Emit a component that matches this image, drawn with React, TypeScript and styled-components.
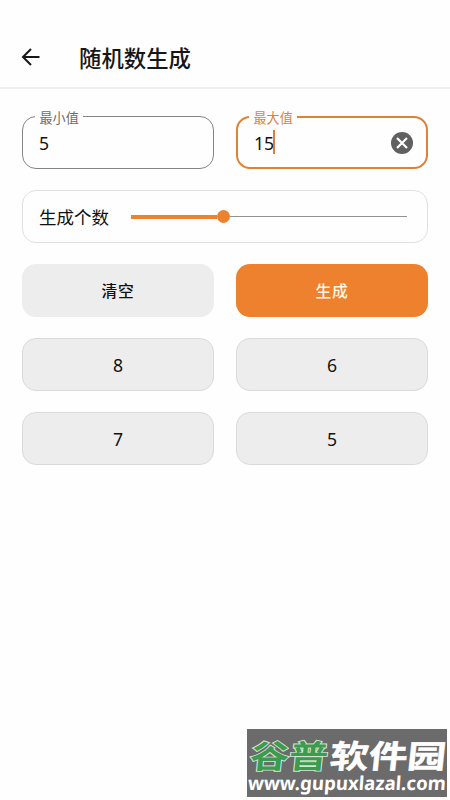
import React from "react";
import styled, { createGlobalStyle, css } from "styled-components";

const ORANGE = "#ee812e";

const GlobalStyle = createGlobalStyle`
  * { box-sizing: border-box; }
  body {
    margin: 0;
    background: #fefefe;
    color: #111;
    font-family: "Noto Sans", "Noto Sans CJK SC", sans-serif;
  }
`;

const Screen = styled.div`
  position: relative;
  width: 450px;
  height: 800px;
  overflow: hidden;
  background: #fefefe;
`;

const AppBar = styled.header`
  display: flex;
  align-items: center;
  height: 89px;
  padding: 27px 0 0 21px;
  border-bottom: 2px solid #f0f0f0;
`;

const BackButton = styled.button`
  display: flex;
  width: 20px;
  height: 20px;
  padding: 0;
  border: 0;
  background: none;
`;

const Title = styled.h1`
  margin: 0 0 0 38px;
  font-family: "Noto Sans CJK SC", sans-serif;
  font-size: 22.4px;
  line-height: 32px;
  font-weight: 500;
  color: #161616;
`;

const Content = styled.main`
  display: grid;
  grid-template-columns: 192px 192px;
  grid-auto-rows: 52.6px;
  gap: 21.5px 22px;
  padding: 27px 22px 0;
`;

const Field = styled.label<{ $active?: boolean }>`
  position: relative;
  display: flex;
  align-items: center;
  padding: 1px 14px 0 16px;
  border-radius: 14px;
  border: ${(p) => (p.$active ? "2px solid #e08136" : "1px solid #858585")};
  ${(p) => p.$active && css`padding: 1px 13px 0 16px;`}
`;

const FieldLabel = styled.span<{ $active?: boolean }>`
  position: absolute;
  top: ${(p) => (p.$active ? "-10px" : "-9px")};
  left: ${(p) => (p.$active ? "11px" : "12px")};
  padding: 0 4.5px;
  background: #fefefe;
  font-family: "Noto Sans CJK SC", sans-serif;
  font-size: 13.1px;
  line-height: 20px;
  color: ${(p) => (p.$active ? "#d98445" : "#6c6c6c")};
`;

const FieldValue = styled.span`
  font-size: 17.6px;
  line-height: 26px;
  color: #111;
`;

const Caret = styled.span`
  width: 2px;
  height: 24px;
  margin: -2px 0 0 -1px;
  background: #d7803a;
`;

const ClearIcon = styled.svg`
  width: 22px;
  height: 22px;
  margin-left: auto;
`;

const SliderCard = styled.section`
  grid-column: 1 / -1;
  display: flex;
  align-items: center;
  padding: 2px 20px 0 16px;
  border: 1.5px solid #e0e0e0;
  border-radius: 14px;
`;

const SliderLabel = styled.span`
  width: 92px;
  font-family: "Noto Sans CJK SC", sans-serif;
  font-size: 17.5px;
  line-height: 26px;
`;

const Track = styled.div`
  display: flex;
  align-items: center;
  flex: 1;
  margin-top: -1px;
`;

const Filled = styled.div`
  width: 86px;
  height: 4px;
  background: ${ORANGE};
`;

const Thumb = styled.div`
  width: 13px;
  height: 13px;
  margin-left: -0.5px;
  border-radius: 50%;
  background: ${ORANGE};
`;

const Remaining = styled.div`
  flex: 1;
  height: 1px;
  background: #929292;
`;

const Action = styled.button<{ $primary?: boolean }>`
  padding: 2px 0 0;
  border: 0;
  border-radius: 14px;
  background: ${(p) => (p.$primary ? ORANGE : "#ededed")};
  color: ${(p) => (p.$primary ? "#fff8ea" : "#111")};
  font: 500 15.8px/24px "Noto Sans CJK SC", sans-serif;
  letter-spacing: 0.7px;
`;

const Result = styled.div`
  display: flex;
  align-items: center;
  justify-content: center;
  border: 1px solid #dadada;
  border-radius: 14px;
  background: #ededed;
  font-size: 17.6px;
  line-height: 26px;
`;

const Watermark = styled.aside`
  position: absolute;
  left: 247px;
  top: 729px;
  width: 200px;
  height: 68px;
  background: #6b6b6b;
`;

const WatermarkArt = styled.svg`
  display: block;
  width: 200px;
  height: 68px;
  overflow: visible;
`;

export default function App() {
  return (
    <>
      <GlobalStyle />
      <Screen>
        <AppBar>
          <BackButton aria-label="返回">
            <svg width="20" height="20" viewBox="0 0 20 20" fill="none" stroke="#181818" strokeWidth="2">
              <path d="M18.5 10H2.5M10 2L2 10L10 18" />
            </svg>
          </BackButton>
          <Title>随机数生成</Title>
        </AppBar>
        <Content>
          <Field>
            <FieldLabel>最小值</FieldLabel>
            <FieldValue>5</FieldValue>
          </Field>
          <Field $active>
            <FieldLabel $active>最大值</FieldLabel>
            <FieldValue>15</FieldValue>
            <Caret />
            <ClearIcon viewBox="0 0 22 22">
              <circle cx="11" cy="11" r="11" fill="#606060" />
              <path d="M6 6L16 16M16 6L6 16" stroke="#fff" strokeWidth="2.2" />
            </ClearIcon>
          </Field>
          <SliderCard>
            <SliderLabel>生成个数</SliderLabel>
            <Track>
              <Filled />
              <Thumb />
              <Remaining />
            </Track>
          </SliderCard>
          <Action>清空</Action>
          <Action $primary>生成</Action>
          {[8, 6, 7, 5].map((n) => (
            <Result key={n}>{n}</Result>
          ))}
        </Content>
        <Watermark>
          <WatermarkArt viewBox="0 0 200 68">
            <g fontFamily="Noto Sans CJK SC, sans-serif" fontWeight="700" fontSize="32" transform="translate(0 38.5) skewX(-6)">
              <text x="2" y="0" textLength="78" lengthAdjust="spacingAndGlyphs" fill="#3c9b4d" stroke="#d5e5d3" strokeWidth="1.8" paintOrder="stroke">谷普</text>
              <text x="82" y="0" textLength="116" lengthAdjust="spacingAndGlyphs" fill="#fff" stroke="#fff" strokeWidth="0.5">软件园</text>
            </g>
            <text x="0.5" y="0" transform="translate(0 61) skewX(-4)" textLength="198" lengthAdjust="spacingAndGlyphs" fill="#fff" fontFamily="Noto Sans, sans-serif" fontWeight="700" fontSize="19">www.gupuxlazal.com</text>
          </WatermarkArt>
        </Watermark>
      </Screen>
    </>
  );
}
